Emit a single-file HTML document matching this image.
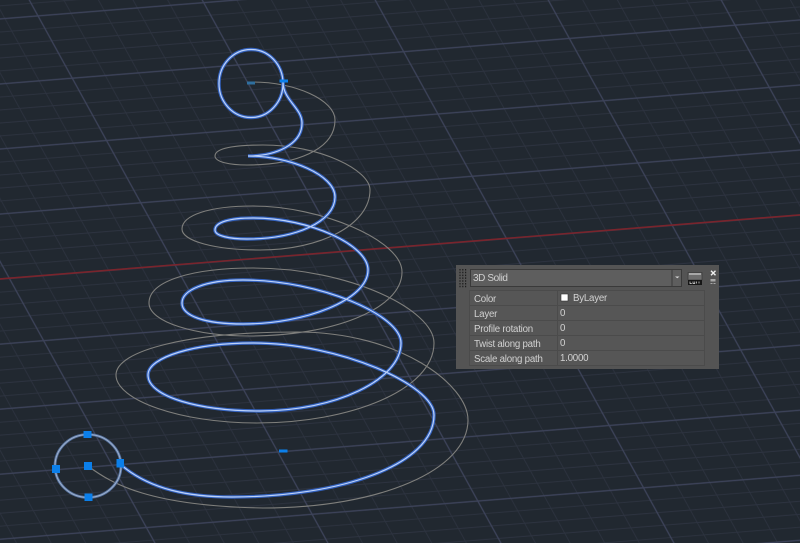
<!DOCTYPE html>
<html><head><meta charset="utf-8"><style>
html,body{margin:0;padding:0;background:#212830}
#w{position:relative;width:800px;height:543px;overflow:hidden;background:#212830;font-family:"Liberation Sans",sans-serif}
svg{position:absolute;left:0;top:0}
.t{position:absolute;font-size:9.7px;letter-spacing:-.22px;color:#d2d2d2;line-height:15px;height:15px;white-space:nowrap}
</style></head><body><div id="w">
<svg width="800" height="543" viewBox="0 0 800 543" style="filter:blur(.35px)">
<defs>
<pattern id="g" patternUnits="userSpaceOnUse" width="165.7" height="62.3" patternTransform="matrix(1 -0.08 0.55 1 38 15.9)">
<path d="M33.1 0V62.3M66.3 0V62.3M99.4 0V62.3M132.6 0V62.3M0 12.5H165.7M0 24.9H165.7M0 37.4H165.7M0 49.8H165.7" fill="none" stroke="#2d3340" stroke-width=".9"/>
<path d="M0 0V62.3M165.7 0V62.3M0 0H165.7M0 62.3H165.7" fill="none" stroke="#3d435a" stroke-width="1.4"/>
</pattern>
</defs>
<rect width="800" height="543" fill="#212830"/>
<rect width="800" height="543" fill="url(#g)"/>
<path d="M0 278.9L800 214.9" stroke="#7a242c" stroke-width="1.6" fill="none"/>

<path fill="none" stroke="#7f7f7c" stroke-width="1.1" d="M88 466C112 484 150 506 263 508C380 508 468 470 468 420C468 385 400 332 297 332C190 332 116 350 116 375C116 400 180 423 257 423C350 423 434 390 434 343C434 310 350 268 253 268C195 268 149 280 149 303C149 322 195 336 250 336C330 336 402 310 402 272C402 240 320 206 253 206C210 206 182 215 182 229C182 241 215 250 260 250C320 250 370 225 370 190C370 170 320 145 263 145C235 145 215 148 215 156C215 162 230 165 247 165C295 165 335 150 335 120C335 100 295 82 253 82"/>

<g fill="none">
<ellipse cx="88" cy="466" rx="33" ry="31.5" stroke="#55729f" stroke-width="2.8"/>
<ellipse cx="88" cy="466" rx="33" ry="31.5" stroke="#9fb0cc" stroke-width="1"/>
<path stroke="#3463c0" stroke-width="3.4" d="M120 464C150 490 190 497 232 497C340 497 434 465 434 415C434 385 340 343 253 343C195 343 148 357 148 375C148 397 200 411 260 411C335 411 401 380 401 343C401 315 320 280 243 280C205 280 182 290 182 303C182 316 205 324 243 324C305 324 368 300 368 270C368 245 310 218 253 218C230 218 215 222 215 230C215 236 230 239 247 239C295 239 335 222 335 197C335 175 290 156 248 156C275 156 302 145 302 123C302 108 283 100 283 82"/>
<ellipse cx="251" cy="83.5" rx="32" ry="34" stroke="#3463c0" stroke-width="3.4"/>
<path stroke="#bcd2fa" stroke-width="1.2" d="M120 464C150 490 190 497 232 497C340 497 434 465 434 415C434 385 340 343 253 343C195 343 148 357 148 375C148 397 200 411 260 411C335 411 401 380 401 343C401 315 320 280 243 280C205 280 182 290 182 303C182 316 205 324 243 324C305 324 368 300 368 270C368 245 310 218 253 218C230 218 215 222 215 230C215 236 230 239 247 239C295 239 335 222 335 197C335 175 290 156 248 156C275 156 302 145 302 123C302 108 283 100 283 82"/>
<ellipse cx="251" cy="83.5" rx="32" ry="34" stroke="#bcd2fa" stroke-width="1.2"/>
</g>
<g fill="#0b7fea">
<rect x="83.5" y="431" width="8" height="7"/>
<rect x="84.5" y="493.5" width="8" height="7.5"/>
<rect x="52" y="465" width="8" height="8"/>
<rect x="116.5" y="459" width="7.5" height="8.5"/>
<rect x="84" y="462" width="8" height="8"/>
<rect x="279.5" y="79.5" width="8.5" height="3"/>
<rect x="279" y="449.5" width="8.5" height="3"/>
<rect x="247" y="81.5" width="8" height="3" fill="#2f6f9f"/>
</g>
</svg>

<div style="position:absolute;left:456px;top:265px;width:263px;height:104px;background:#545454"></div>
<svg width="800" height="543" viewBox="0 0 800 543">
<g stroke="#1e1e1e" stroke-width="1.2">
<path d="M460 269V288.5M462.8 269V288.5M465.6 269V288.5" stroke-dasharray="1.5 1.3" fill="none"/>
</g>
<rect x="470.5" y="269.5" width="211" height="17" fill="#5e5e5e" stroke="#3a3a3a"/>
<path d="M672 270V286" stroke="#3a3a3a"/>
<path d="M675 276.5h4.5l-2.2 1.8z" fill="#d8d8d8"/>
<rect x="688" y="272.5" width="14" height="7.5" fill="#6e6e6e" stroke="#333" stroke-width=".6"/>
<rect x="689" y="273" width="12" height="2" fill="#a8a8a8"/>
<rect x="688" y="280" width="14" height="5" fill="#161616"/>
<path d="M690 281.5v2h1.8M693 281.5v2h1.8v-2M696.5 281.5v2M699 281.5v2" stroke="#e4e4e4" stroke-width=".7" fill="none"/>
<path d="M711 270.8L715.5 275.2M715.5 270.8L711 275.2" stroke="#efefef" stroke-width="1.4"/>
<rect x="710.5" y="279" width="5" height="2.5" fill="#a8a8a8"/>
<path d="M710.5 283.5h2M713.5 283.5h2" stroke="#a8a8a8"/>
<rect x="469" y="291" width="236" height="75" fill="#565656"/>
<path d="M469 290.5H705M469 305.5H705M469 320.5H705M469 335.5H705M469 350.5H705M469 365.5H705M557.5 291V366M469.5 291V366M704.5 291V366" stroke="#4b4b4b" fill="none"/>
<rect x="561" y="294" width="7" height="7" fill="#fff" stroke="#333" stroke-width=".6"/>
</svg>
<div class="t" style="left:474px;top:291.5px">Color</div>
<div class="t" style="left:474px;top:306.5px">Layer</div>
<div class="t" style="left:474px;top:321.5px">Profile rotation</div>
<div class="t" style="left:474px;top:336.5px">Twist along path</div>
<div class="t" style="left:474px;top:351.5px">Scale along path</div>
<div class="t" style="left:573px;top:290.5px">ByLayer</div>
<div class="t" style="left:560px;top:305.5px">0</div>
<div class="t" style="left:560px;top:320.5px">0</div>
<div class="t" style="left:560px;top:335.5px">0</div>
<div class="t" style="left:560px;top:350.5px">1.0000</div>
<div class="t" style="left:473px;top:270.5px;font-size:10px;letter-spacing:-.4px">3D Solid</div>
</div></body></html>
